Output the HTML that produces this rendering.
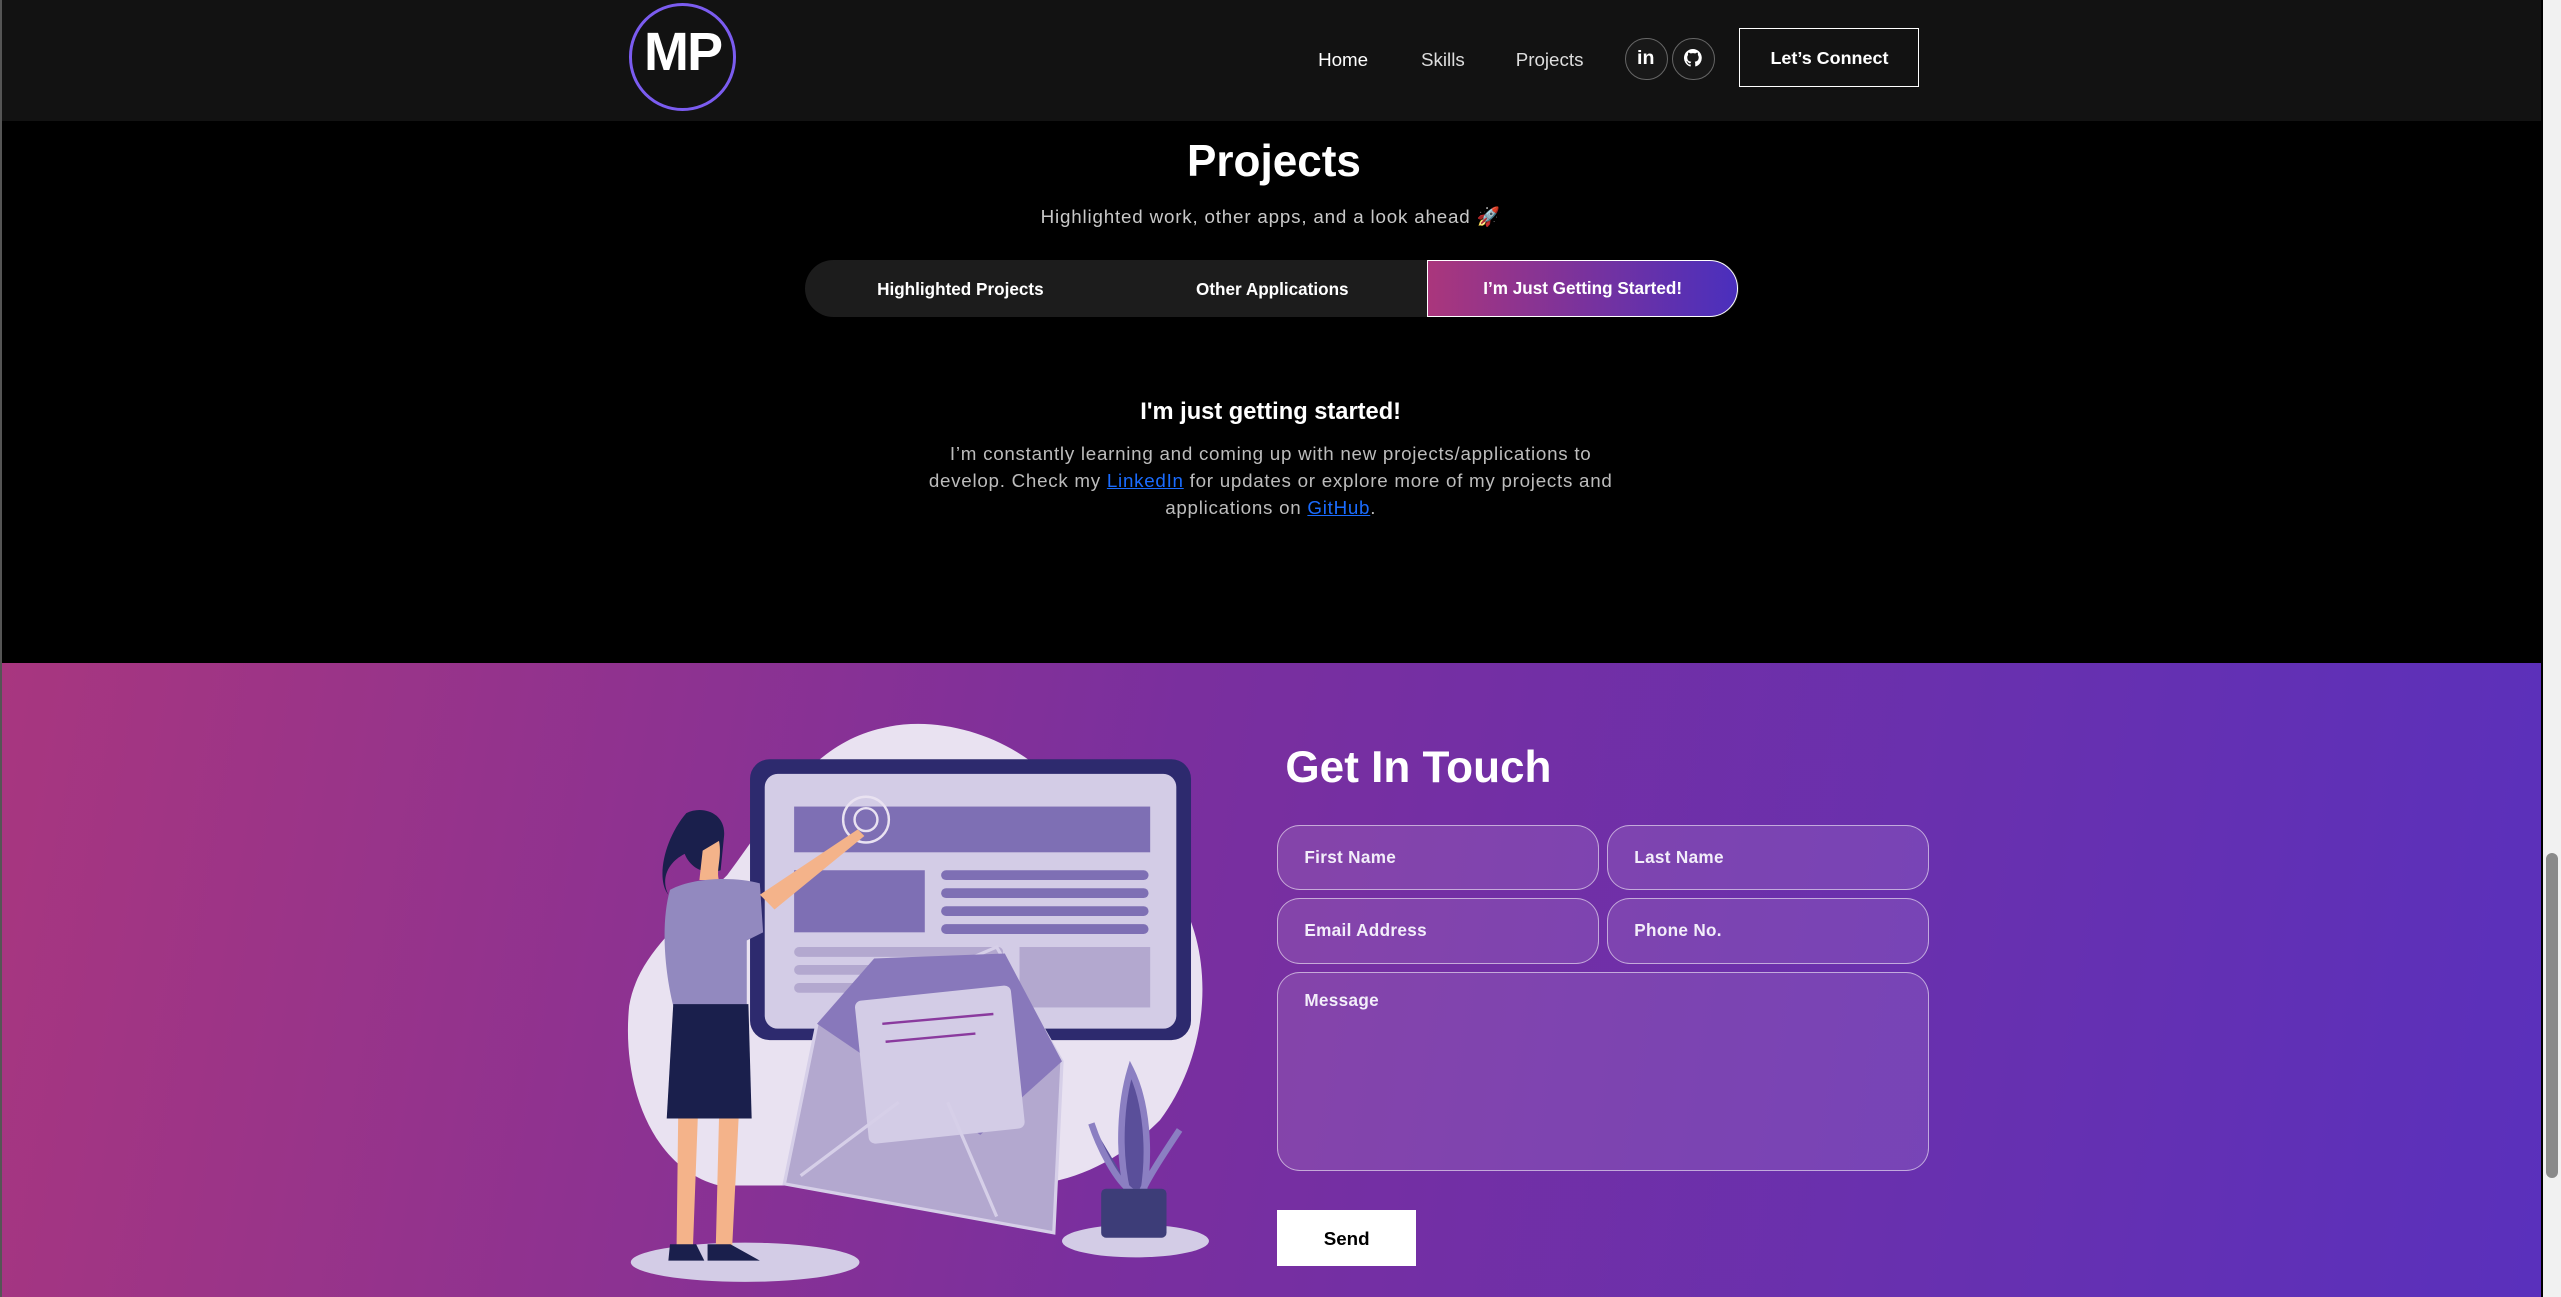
<!DOCTYPE html>
<html><head><meta charset="utf-8">
<style>
html,body{margin:0;padding:0;overflow:hidden;background:#000;width:2561px;height:1297px}
#w{zoom:1.63329;width:1568px;height:794px;position:relative;font-family:"Liberation Sans",sans-serif;color:#fff;overflow:hidden}
.a{position:absolute}
header{position:absolute;left:0;top:0;width:1556px;height:74px;background:#121212}
.nav{font-size:11.5px;top:29px;color:#fff}
.ic{width:25px;height:25px;border:1px solid #666;border-radius:50%;top:22px;background:#181818}
.in{position:absolute;left:0;top:0;width:24px;height:24px;display:flex;align-items:center;justify-content:center}
.field{position:absolute;background:rgba(255,255,255,.1);border:1px solid rgba(255,255,255,.55);border-radius:14px;box-sizing:border-box;font-size:10.5px;font-weight:bold;padding-left:16px;line-height:38px;color:#f3eefa;letter-spacing:.2px}
</style></head><body><div id="w">
<div class="a" style="left:0;top:0;width:1px;height:794px;background:#555;z-index:5"></div>
<header>
 <div class="a" style="left:385px;top:2px;width:62px;height:62px;border-radius:50%;border:2px solid #7b5cf0;"></div>
 <div class="a" style="left:385px;top:13px;width:66px;text-align:center;font-size:33px;font-weight:bold;letter-spacing:-1px">MP</div>
 <div class="a nav" style="left:807px;top:30px">Home</div>
 <div class="a nav" style="left:870px;top:30px;color:#ddd">Skills</div>
 <div class="a nav" style="left:928px;top:30px;color:#ddd">Projects</div>
 <div class="a ic" style="left:995px;top:23px"><div class="in" style="font-weight:bold;font-size:12px">in</div></div>
 <div class="a ic" style="left:1024px;top:23px"><div class="in"><svg width="11" height="11" viewBox="0 0 16 16"><path fill="#fff" d="M8 0a8 8 0 0 0-2.5 15.6c.4 0 .5-.2.5-.4v-1.5c-2.2.5-2.700-1-2.7-1-.4-.9-.9-1.2-.9-1.2-.7-.5.1-.5.1-.5.8.1 1.2.8 1.2.8.7 1.3 1.9.9 2.3.7.1-.5.3-.9.5-1.1-1.8-.2-3.6-.9-3.6-4 0-.9.3-1.6.8-2.1-.1-.2-.4-1 .1-2.1 0 0 .7-.2 2.2.8a7.5 7.5 0 0 1 4 0c1.5-1 2.2-.8 2.2-.8.4 1.1.2 1.900.1 2.1.5.6.8 1.3.8 2.1 0 3.1-1.9 3.8-3.6 4 .3.3.5.8.5 1.5v2.2c0 .2.1.5.6.4A8 8 0 0 0 8 0z"/></svg></div></div>
 <div class="a" style="left:1065px;top:17px;width:109px;height:35px;border:1px solid #fff;text-align:center;line-height:36px;font-size:11px;font-weight:bold">Let’s Connect</div>
</header>
<div class="a" style="left:0;top:84px;width:1556px;text-align:center;font-size:27px;font-weight:bold;padding-left:2px">Projects</div>
<div class="a" style="left:0;top:126px;width:1556px;text-align:center;font-size:11.5px;color:#c8c8c8;letter-spacing:.5px">Highlighted work, other apps, and a look ahead 🚀</div>
<div class="a" style="left:493px;top:159px;width:572px;height:35px;background:#1c1c1c;border-radius:18px"></div>
<div class="a" style="left:493px;top:171px;width:190px;text-align:center;font-size:10.5px;font-weight:bold">Highlighted Projects</div>
<div class="a" style="left:684px;top:171px;width:190px;text-align:center;font-size:10.5px;font-weight:bold">Other Applications</div>
<div class="a" style="left:874px;top:159px;width:190px;height:35px;box-sizing:border-box;border:1px solid #fff;border-radius:0 18px 18px 0;background:linear-gradient(90deg,#aa367c,#4a2fbd);text-align:center;line-height:34px;font-size:10.5px;font-weight:bold">I’m Just Getting Started!</div>
<div class="a" style="left:0;top:244px;width:1556px;text-align:center;font-size:14.5px;font-weight:bold">I'm just getting started!</div>
<div class="a" style="left:0;top:270px;width:1556px;text-align:center;font-size:11.5px;line-height:16.5px;color:#bcbcbc;letter-spacing:.45px">I’m constantly learning and coming up with new projects/applications to<br>develop. Check my <span style="color:#1a6cff;text-decoration:underline">LinkedIn</span> for updates or explore more of my projects and<br>applications on <span style="color:#1a6cff;text-decoration:underline">GitHub</span>.</div>
<div class="a" style="left:0;top:406px;width:1556px;height:388px;background:linear-gradient(100deg,#a8367f 0%,#7a2f9e 45%,#5a30bc 100%)">
 <svg class="a" style="left:380px;top:35px" width="365" height="350" viewBox="380 441 365 350">
  <path d="M540 446c40-10 90 10 110 40l70 60c25 40 20 100-10 140-30 30-60 40-90 40H440c-40-10-60-60-55-110 5-30 30-50 60-80 30-40 50-80 95-90z" fill="#e9e2f1"/>
  <rect x="459" y="465" width="270" height="172" rx="12" fill="#2d2a6e"/>
  <rect x="468" y="474" width="252" height="156" rx="8" fill="#d3cce6"/>
  <rect x="486" y="494" width="218" height="28" fill="#7e6fb4"/>
  <rect x="486" y="533" width="80" height="38" fill="#7e6fb4"/>
  <g fill="#7e6fb4"><rect x="576" y="533" width="127" height="6" rx="3"/><rect x="576" y="544" width="127" height="6" rx="3"/><rect x="576" y="555" width="127" height="6" rx="3"/><rect x="576" y="566" width="127" height="6" rx="3"/></g>
  <g fill="#b3a8cf"><rect x="486" y="580" width="128" height="6" rx="3"/><rect x="486" y="591" width="128" height="6" rx="3"/><rect x="486" y="602" width="128" height="6" rx="3"/><rect x="624" y="580" width="80" height="37" /></g>
  <circle cx="530" cy="502" r="14" fill="none" stroke="#e9e2f1" stroke-width="1.5"/><circle cx="530" cy="502" r="7" fill="none" stroke="#e9e2f1" stroke-width="1.5"/>
  <path d="M500 627l110-47 40 70-5 105-165-30z" fill="#b3a8cf" stroke="#d6cfe8" stroke-width="2"/>
  <path d="M500 627l35-40 80-3 35 66-50 45z" fill="#8878bb"/>
  <rect x="527" y="608" width="96" height="88" rx="4" fill="#d3cce6" transform="rotate(-6 575 650)"/>
  <path d="M540 627l68-6M542 638l55-5" stroke="#8a3a9e" stroke-width="1.5"/>
  <path d="M490 720l60-45M610 745l-30-70" stroke="#d6cfe8" stroke-width="2"/>
  <ellipse cx="695" cy="760" rx="45" ry="10" fill="#d3cce6"/>
  <path d="M692 655c-6 20-8 50-2 75l10 0c4-25 2-55-8-75zM668 688c5 15 15 35 25 42M722 692c-8 12-20 30-24 40" fill="#5a4f9a" stroke="#8b7fc2" stroke-width="4"/>
  <rect x="674" y="728" width="40" height="30" rx="3" fill="#3d3d78"/>
  <ellipse cx="456" cy="773" rx="70" ry="12" fill="#d3cce6"/>
  <path d="M420 498c10-5 25 0 23 15l-2 20c-8 3-18 0-22-10-10 5-15 15-10 25-8-10-2-35 11-50z" fill="#1a1f4c"/>
  <path d="M440 515c2 10-2 18 0 24h-12l2-18z" fill="#f4b38a"/>
  <path d="M410 545c15-8 40-8 55-4l2 30-10 5 0 40h-45c-5-20-8-50-2-71z" fill="#9289bf"/>
  <path d="M465 548l60-40 4 4-55 45z" fill="#f4b38a"/>
  <path d="M412 615h46l2 70h-52z" fill="#1a1f4c"/>
  <path d="M415 685h12l-3 80h-10zM440 685h12l-4 80h-10z" fill="#f4b38a"/>
  <path d="M410 762h16l5 10h-22zM433 762h14l18 10h-32z" fill="#1a1f4c"/>
 </svg>
 <div class="a" style="left:787px;top:49px;font-size:27px;font-weight:bold">Get In Touch</div>
 <div class="field" style="left:782px;top:99px;width:197px;height:40px">First Name</div>
 <div class="field" style="left:984px;top:99px;width:197px;height:40px">Last Name</div>
 <div class="field" style="left:782px;top:144px;width:197px;height:40px">Email Address</div>
 <div class="field" style="left:984px;top:144px;width:197px;height:40px">Phone No.</div>
 <div class="field" style="left:782px;top:189px;width:399px;height:122px;line-height:20px;padding-top:7px">Message</div>
 <div class="a" style="left:782px;top:335px;width:85px;height:34px;background:#fff;color:#000;text-align:center;line-height:35px;font-size:11.5px;font-weight:bold">Send</div>
</div>
<div class="a" style="left:1557px;top:0;width:11px;height:794px;background:#f1f1f1"></div>
<div class="a" style="left:1559px;top:522px;width:7px;height:199px;background:#8a8a8a;border-radius:4px"></div>
</div></body></html>
